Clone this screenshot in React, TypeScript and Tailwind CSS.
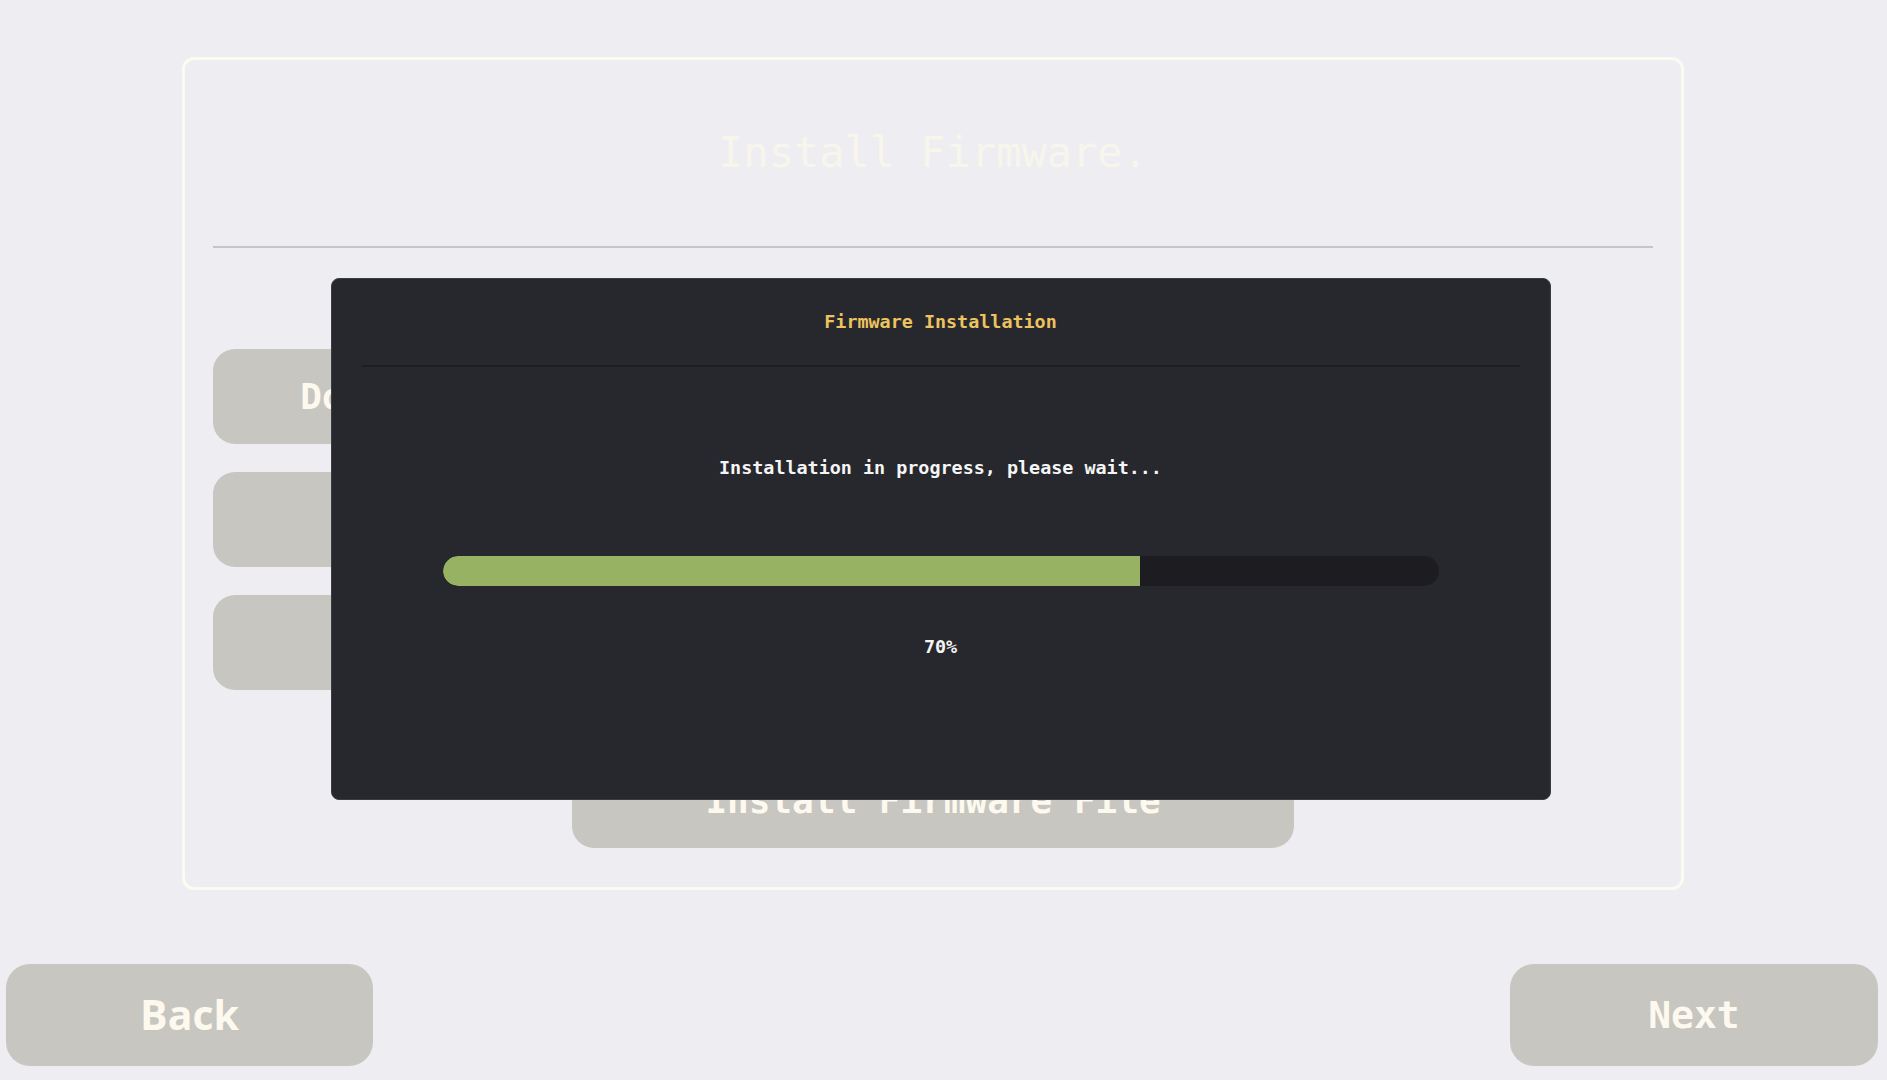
const mono = "font-['DejaVu_Sans_Mono',monospace]";

const actions = ["Download Firmware", "Check Update", "Verify File"];

function ProgressModal({ percent }: { percent: number }) {
  return (
    <div className="fixed inset-0 flex items-center justify-center pb-[3px] pr-[6px]">
      <div className="flex h-[522px] w-[1220px] flex-col rounded-[8px] border border-[#3b3c42] bg-[#27282d] px-[30px]">
        <div className="flex h-[88px] shrink-0 items-center justify-center border-b-2 border-[#1d1e22]">
          <h3 className={`${mono} text-[18.4px] font-bold leading-[22px] text-[#ecc35f]`}>
            Firmware Installation
          </h3>
        </div>
        <p className={`${mono} mt-[90px] text-center text-[18.4px] font-bold leading-[22px] text-[#f5f5f5]`}>
          Installation in progress, please wait...
        </p>
        <div className="mx-auto mt-[77px] h-[30px] w-[996px] overflow-hidden rounded-full bg-[#1c1c21]">
          <div className="h-full rounded-l-full bg-[#97b262]" style={{ width: `${percent}%` }} />
        </div>
        <p className={`${mono} mt-[50px] text-center text-[18.4px] font-bold leading-[22px] text-[#f5f5f5]`}>
          {percent}%
        </p>
      </div>
    </div>
  );
}

export default function App() {
  return (
    <div className="relative h-[1080px] w-full overflow-hidden bg-[#eeeef2]">
      <div className="ml-[182px] mt-[57px] flex h-[833px] w-[1502px] flex-col rounded-[12px] border-[3px] border-[#fcfbf1] px-[28px] pb-[39px]">
        <div className="flex h-[186px] shrink-0 items-center justify-center">
          <h1 className={`${mono} text-[42px] leading-[50px] text-[#f7f5ec]`}>Install Firmware.</h1>
        </div>
        <div className="h-[2px] shrink-0 bg-[#c6c6ca]" />

        <div className="mt-[101px] flex flex-col gap-[28px]">
          {actions.map((label) => (
            <button
              key={label}
              className={`${mono} h-[95px] w-[543px] rounded-[22px] bg-[#c8c6c1] text-[36px] font-bold text-[#fdf9ef]`}
            >
              {label}
            </button>
          ))}
        </div>

        <div className="mt-auto flex justify-center">
          <button
            className={`${mono} h-[95px] w-[722px] rounded-[22px] bg-[#c8c6c1] text-[36px] font-bold text-[#fdf9ef]`}
          >
            Install Firmware File
          </button>
        </div>
      </div>

      <div className="mt-[74px] flex justify-between pl-[6px] pr-[9px]">
        <button className="h-[102px] w-[367px] rounded-[24px] bg-[#c8c6c1] font-['Open_Sans',sans-serif] text-[41px] font-bold text-[#fdf9ef]">
          Back
        </button>
        <button className={`${mono} h-[102px] w-[368px] rounded-[24px] bg-[#c8c6c1] text-[38px] font-bold text-[#fdf9ef]`}>
          Next
        </button>
      </div>

      <ProgressModal percent={70} />
    </div>
  );
}
